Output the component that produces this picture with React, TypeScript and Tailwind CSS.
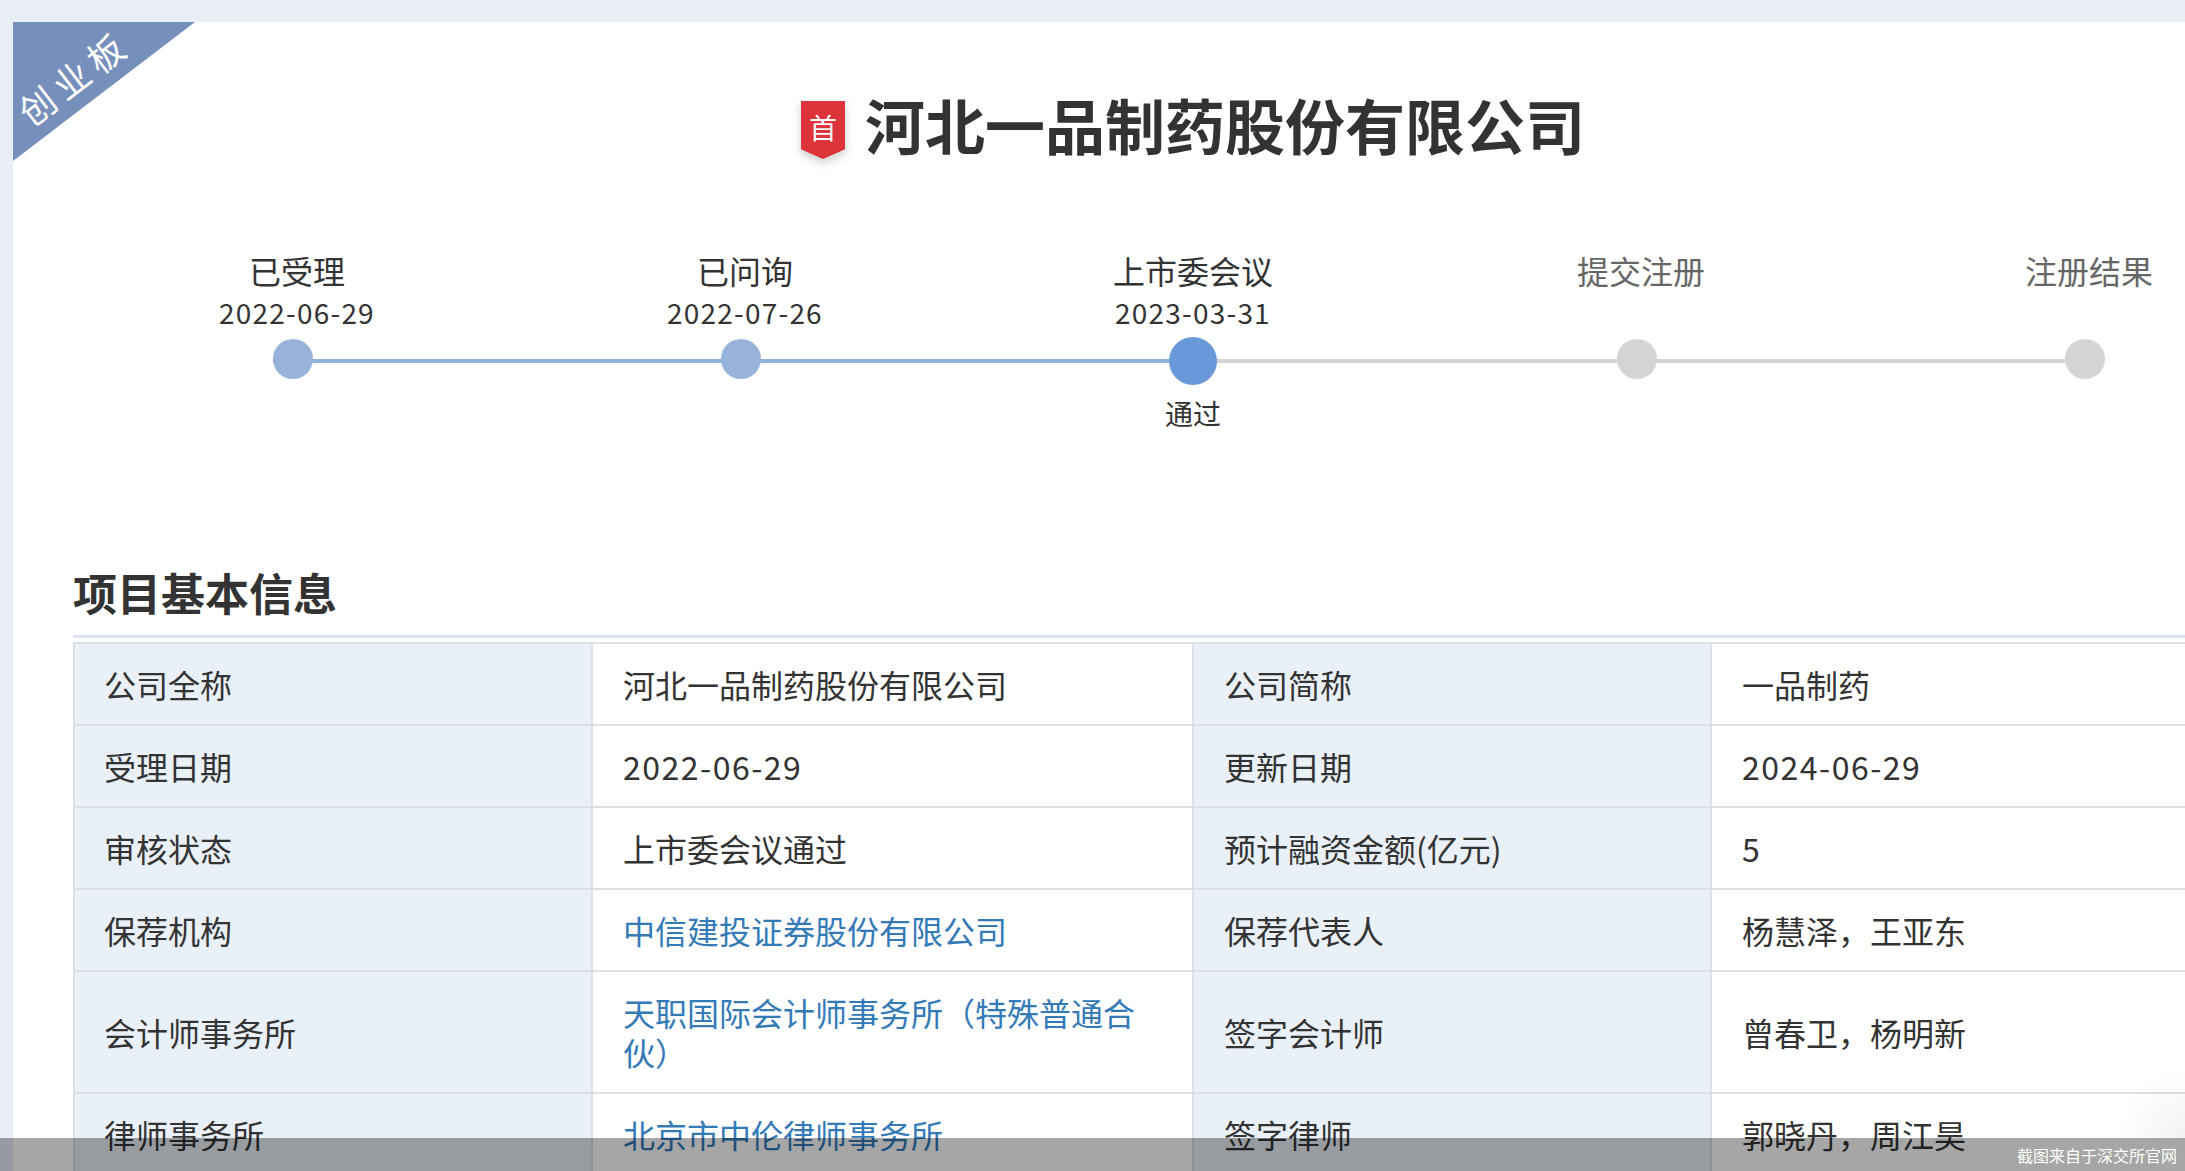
const font = "font-['Noto_Sans_CJK_SC','Noto_Sans',sans-serif]";

const steps = [
  { label: "已受理", date: "2022-06-29", state: "done" },
  { label: "已问询", date: "2022-07-26", state: "done" },
  { label: "上市委会议", date: "2023-03-31", state: "active", note: "通过" },
  { label: "提交注册", state: "todo" },
  { label: "注册结果", state: "todo" },
];

type Cell = { text: string; link?: boolean; num?: boolean };

const rows: { a: string; b: Cell; c: string; d: Cell }[] = [
  { a: "公司全称", b: { text: "河北一品制药股份有限公司" }, c: "公司简称", d: { text: "一品制药" } },
  { a: "受理日期", b: { text: "2022-06-29", num: true }, c: "更新日期", d: { text: "2024-06-29", num: true } },
  { a: "审核状态", b: { text: "上市委会议通过" }, c: "预计融资金额(亿元)", d: { text: "5" } },
  { a: "保荐机构", b: { text: "中信建投证券股份有限公司", link: true }, c: "保荐代表人", d: { text: "杨慧泽，王亚东" } },
  { a: "会计师事务所", b: { text: "天职国际会计师事务所（特殊普通合伙）", link: true }, c: "签字会计师", d: { text: "曾春卫，杨明新" } },
  { a: "律师事务所", b: { text: "北京市中伦律师事务所", link: true }, c: "签字律师", d: { text: "郭晓丹，周江昊" } },
];

function Step({ step, index }: { step: (typeof steps)[number]; index: number }) {
  const lineDone = index < 2;
  return (
    <div className="flex w-[448px] shrink-0 flex-col items-center">
      <div className={`h-[47px] text-[32px] leading-[46px] ${step.state === "todo" ? "text-[#666]" : "text-[#333]"}`}>
        {step.label}
      </div>
      <div className="h-[36px] text-[28px] leading-[36px] tracking-[1.2px] text-[#333]">{step.date}</div>
      <div className="relative mt-[7px] h-12 w-12">
        {index < 4 && (
          <div className={`absolute top-[22px] left-0 h-1 w-[448px] ${lineDone ? "bg-[#8fb0da]" : "bg-[#d4d4d4]"}`} />
        )}
        {step.state === "active" ? (
          <div className="relative h-12 w-12 rounded-full bg-[#6a98d9]" />
        ) : (
          <div className={`relative mt-[2px] h-10 w-10 rounded-full ${step.state === "done" ? "bg-[#97b3d9]" : "bg-[#d4d4d4]"}`} />
        )}
      </div>
      {step.note && <div className="mt-[10px] text-[28px] leading-[36px] text-[#333]">{step.note}</div>}
    </div>
  );
}

function Value({ cell }: { cell: Cell }) {
  return (
    <td className="border-2 border-[#dcdfe3] px-[30px] py-5 align-middle">
      <span className={`${cell.link ? "text-[#337ab7]" : "text-[#333]"} ${cell.num ? "tracking-[1.5px]" : ""}`}>{cell.text}</span>
    </td>
  );
}

function Label({ text }: { text: string }) {
  return <td className="border-2 border-[#dcdfe3] bg-[#e9f0f8] px-[30px] py-5 align-middle text-[#333] first:pl-[29px]">{text}</td>;
}

export default function App() {
  return (
    <div className={`relative h-screen w-full overflow-hidden bg-[#e9edf6] ${font}`}>
      <div className="pt-[22px] pl-[13px]">
        <div className="relative h-[1300px] w-[2357px] bg-white px-[60px]">
          {/* corner ribbon */}
          <svg className="absolute top-0 left-0" width="182" height="139" viewBox="0 0 182 139">
            <polygon points="0,0 182,0 0,139" fill="#7790bb" />
          </svg>
          <div className="absolute top-[34px] left-[-8px] w-[136px] origin-center -rotate-[37.4deg] text-center text-[36px] leading-[40px] tracking-[7px] whitespace-nowrap text-white">
            创业板
          </div>

          <div className="flex items-center justify-center gap-[20px] pt-[62px] pl-[3px]">
            <div className="mt-[12px] drop-shadow-[0_4px_5px_rgba(0,0,0,0.2)]">
              <div className="h-[58px] w-[44px] bg-[#dd333b] pt-[8px] text-center text-[28px] leading-[36px] text-white [clip-path:polygon(0_0,100%_0,100%_83%,50%_100%,0_83%)]">
                首
              </div>
            </div>
            <h1 className="text-[60px] leading-[80px] font-bold text-[#333]">河北一品制药股份有限公司</h1>
          </div>

          <div className="mt-[83px] flex">
            {steps.map((s, i) => (
              <Step key={s.label} step={s} index={i} />
            ))}
          </div>

          <h2 className="mt-[131px] text-[44px] leading-[60px] font-bold text-[#333]">项目基本信息</h2>
          <div className="mt-[13px] h-[3px] bg-[#dbe4f0]" />
          <table className="mt-[4px] w-[2237px] table-fixed border-collapse text-[32px] leading-[40px]">
            <colgroup>
              <col className="w-[518px]" />
              <col className="w-[601px]" />
              <col className="w-[518px]" />
              <col className="w-[600px]" />
            </colgroup>
            <tbody>
              {rows.map((r) => (
                <tr key={r.a}>
                  <Label text={r.a} />
                  <Value cell={r.b} />
                  <Label text={r.c} />
                  <Value cell={r.d} />
                </tr>
              ))}
            </tbody>
          </table>
        </div>
      </div>

      {/* faint shade in the corner above the bar */}
      <div className="absolute right-0 bottom-[33px] h-[80px] w-[60px] bg-[radial-gradient(circle_at_100%_100%,rgba(0,0,0,0.05),transparent_70%)]" />
      <div className="absolute right-0 bottom-0 left-0 flex h-[33px] items-center justify-end bg-black/35 pr-[8px] text-base text-white">
        截图来自于深交所官网
      </div>
    </div>
  );
}
